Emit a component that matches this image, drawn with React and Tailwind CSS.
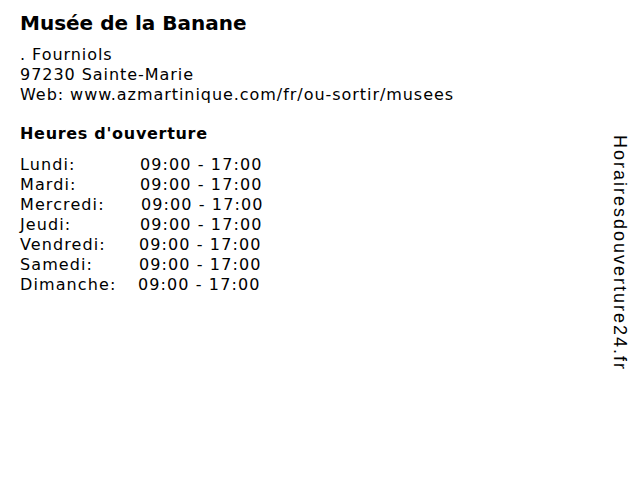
const hours = [
  { day: 'Lundi:', time: '09:00 - 17:00', pad: 'pl-[2px]' },
  { day: 'Mardi:', time: '09:00 - 17:00', pad: 'pl-[2px]' },
  { day: 'Mercredi:', time: '09:00 - 17:00', pad: 'pl-[3px]' },
  { day: 'Jeudi:', time: '09:00 - 17:00', pad: 'pl-[2px]' },
  { day: 'Vendredi:', time: '09:00 - 17:00', pad: 'pl-[1px]' },
  { day: 'Samedi:', time: '09:00 - 17:00', pad: 'pl-[1px]' },
  { day: 'Dimanche:', time: '09:00 - 17:00', pad: 'pl-0' },
];

export default function App() {
  return (
    <div className="flex w-[640px] h-[480px] bg-white text-black font-['DejaVu_Sans',sans-serif]">
      <div className="flex-1 pl-5 pt-[10px]">
        <h1 className="text-[20px] font-bold leading-[26px]">Musée de la Banane</h1>
        <div className="mt-[9px] text-[16px] leading-[20px] tracking-[0.95px]">
          <p>. Fourniols</p>
          <p>97230 Sainte-Marie</p>
          <p>Web: www.azmartinique.com/fr/ou-sortir/musees</p>
        </div>
        <h2 className="mt-[19px] text-[16px] font-bold leading-[20px] tracking-[0.7px]">Heures d'ouverture</h2>
        <div className="mt-[11px] text-[16px] leading-[20px] tracking-[1.1px]">
          {hours.map((h) => (
            <div key={h.day} className="flex">
              <span className="w-[118px]">{h.day}</span>
              <span className={h.pad}>{h.time}</span>
            </div>
          ))}
        </div>
      </div>
      <div className="w-[40px] pt-[135px] flex justify-center">
        <span className="[writing-mode:vertical-rl] font-['Liberation_Sans',sans-serif] text-[18px] leading-[20px] tracking-[2px]">
          Horairesdouverture24.fr
        </span>
      </div>
    </div>
  );
}
